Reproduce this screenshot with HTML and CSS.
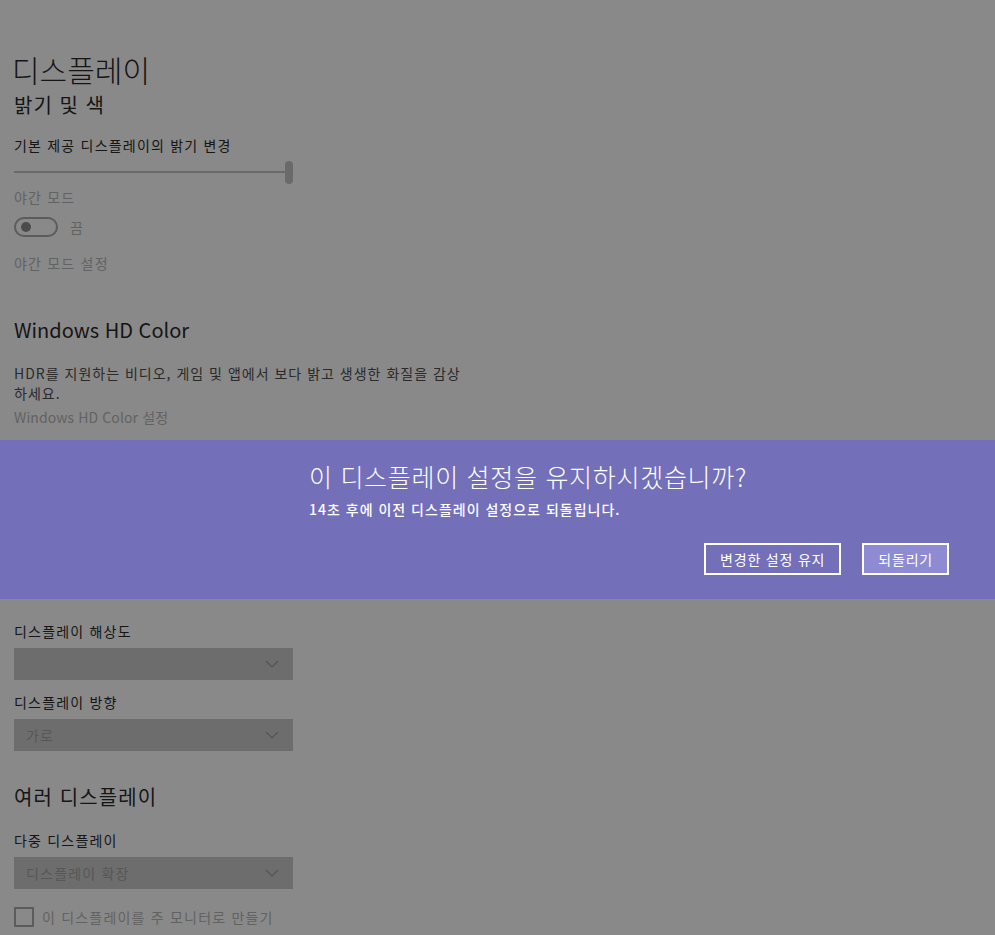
FILE: index.html
```html
<!DOCTYPE html>
<html lang="ko">
<head>
  <meta charset="UTF-8">
  <title>디스플레이</title>
  <link rel="stylesheet" href="styles.css">
</head>
<body>
  <div class="page">
    <h1 class="title">디스플레이</h1>
    <h2 class="subtitle">밝기 및 색</h2>

    <div class="label">기본 제공 디스플레이의 밝기 변경</div>
    <div class="slider">
      <div class="track"></div>
      <div class="thumb"></div>
    </div>

    <div class="label muted night">야간 모드</div>
    <div class="toggle-row">
      <span class="toggle"><span class="dot"></span></span>
      <span class="muted">끔</span>
    </div>
    <div class="label muted link">야간 모드 설정</div>

    <h2 class="section hd">Windows HD Color</h2>
    <p class="desc">HDR를 지원하는 비디오, 게임 및 앱에서 보다 밝고 생생한 화질을 감상하세요.</p>
    <div class="label muted hdlink">Windows HD Color 설정</div>
  </div>

  <div class="banner">
    <div class="banner-inner">
      <div class="banner-title">이 디스플레이 설정을 유지하시겠습니까?</div>
      <div class="banner-sub">14초 후에 이전 디스플레이 설정으로 되돌립니다.</div>
      <div class="banner-btns">
        <button class="btn">변경한 설정 유지</button>
        <button class="btn btn-fill">되돌리기</button>
      </div>
    </div>
  </div>

  <div class="page lower">
    <div class="label">디스플레이 해상도</div>
    <div class="select"><span></span><svg class="chev" width="14" height="8" viewBox="0 0 14 8"><path d="M1 1l6 6 6-6" fill="none" stroke="#545454" stroke-width="1.2"/></svg></div>

    <div class="label">디스플레이 방향</div>
    <div class="select"><span>가로</span><svg class="chev" width="14" height="8" viewBox="0 0 14 8"><path d="M1 1l6 6 6-6" fill="none" stroke="#545454" stroke-width="1.2"/></svg></div>

    <h2 class="section multi">여러 디스플레이</h2>
    <div class="label">다중 디스플레이</div>
    <div class="select"><span>디스플레이 확장</span><svg class="chev" width="14" height="8" viewBox="0 0 14 8"><path d="M1 1l6 6 6-6" fill="none" stroke="#545454" stroke-width="1.2"/></svg></div>

    <label class="check-row">
      <span class="check"></span>
      <span class="muted">이 디스플레이를 주 모니터로 만들기</span>
    </label>
  </div>
</body>
</html>
```

FILE: styles.css
```css
body {
  margin: 0;
  background: #898989;
  color: #151515;
  font-family: "Noto Sans CJK KR", "Noto Sans", sans-serif;
  font-size: 14px;
  height: 935px;
  overflow: hidden;
}

.page {
  padding: 0 14px;
  letter-spacing: 1.2px;
}

.title {
  margin: 0 0 0 -2px;
  padding-top: 47px;
  font-size: 30px;
  font-weight: 300;
  line-height: 44px;
  letter-spacing: 0;
}

.subtitle {
  margin: 0;
  font-size: 20px;
  font-weight: 400;
  line-height: 28px;
  letter-spacing: 1px;
}

.label {
  line-height: 20px;
}

.muted {
  color: #626262;
}

.subtitle + .label {
  margin-top: 16px;
}

.slider {
  position: relative;
  width: 279px;
  height: 24px;
  margin-top: 6px;
}

.track {
  position: absolute;
  left: 0;
  right: 0;
  top: 10px;
  height: 2px;
  background: #6a6a6a;
}

.thumb {
  position: absolute;
  right: 0;
  top: 0;
  width: 8px;
  height: 23px;
  border-radius: 4px;
  background: #6a6a6a;
}

.night {
  margin-top: 2px;
}

.toggle-row {
  display: flex;
  align-items: center;
  gap: 12px;
  margin-top: 10px;
  height: 20px;
}

.toggle {
  display: flex;
  align-items: center;
  width: 35px;
  height: 16px;
  border: 2px solid #5c5c5c;
  border-radius: 10px;
  padding-left: 5px;
}

.dot {
  width: 10px;
  height: 10px;
  border-radius: 50%;
  background: #4c4c4c;
}

.link {
  margin-top: 16px;
}

.section {
  margin: 46px 0 0;
  font-size: 20px;
  font-weight: 400;
  line-height: 28px;
  letter-spacing: 1.1px;
}

.section.hd {
  margin-top: 43px;
  letter-spacing: 0;
}

.desc {
  margin: 19px 0 0;
  width: 450px;
  line-height: 20px;
  letter-spacing: 1px;
  color: #2a2a2a;
}

.hdlink {
  margin-top: 4px;
  letter-spacing: 0.1px;
}

.banner {
  margin-top: 13px;
  height: 159px;
  background: #736fb8;
  color: #fff;
}

.banner-inner {
  width: 640px;
  margin-left: 309px;
  padding-top: 18px;
}

.banner-title {
  font-size: 25px;
  font-weight: 300;
  line-height: 36px;
  letter-spacing: 0.7px;
}

.banner-sub {
  margin-top: 5px;
  font-size: 14px;
  font-weight: 500;
  line-height: 20px;
  letter-spacing: 1px;
}

.banner-btns {
  display: flex;
  justify-content: flex-end;
  gap: 21px;
  margin-top: 24px;
}

.btn {
  height: 32px;
  padding: 0 14px;
  border: 2px solid #fff;
  background: transparent;
  color: #fff;
  font-family: inherit;
  font-size: 14px;
  letter-spacing: 0.8px;
}

.btn-fill {
  background: #8e8bd2;
}

.lower {
  padding-top: 22px;
}

.select {
  display: flex;
  justify-content: space-between;
  align-items: center;
  width: 279px;
  height: 32px;
  margin: 7px 0 12px;
  padding: 0 14px 0 12px;
  box-sizing: border-box;
  background: #6d6d6d;
  color: #575757;
}

.multi {
  margin-top: 32px;
}

.multi + .label {
  margin-top: 19px;
}

.check-row {
  display: flex;
  align-items: center;
  gap: 8px;
  margin-top: 18px;
}

.check {
  width: 16px;
  height: 16px;
  border: 2px solid #5c5c5c;
}
```
